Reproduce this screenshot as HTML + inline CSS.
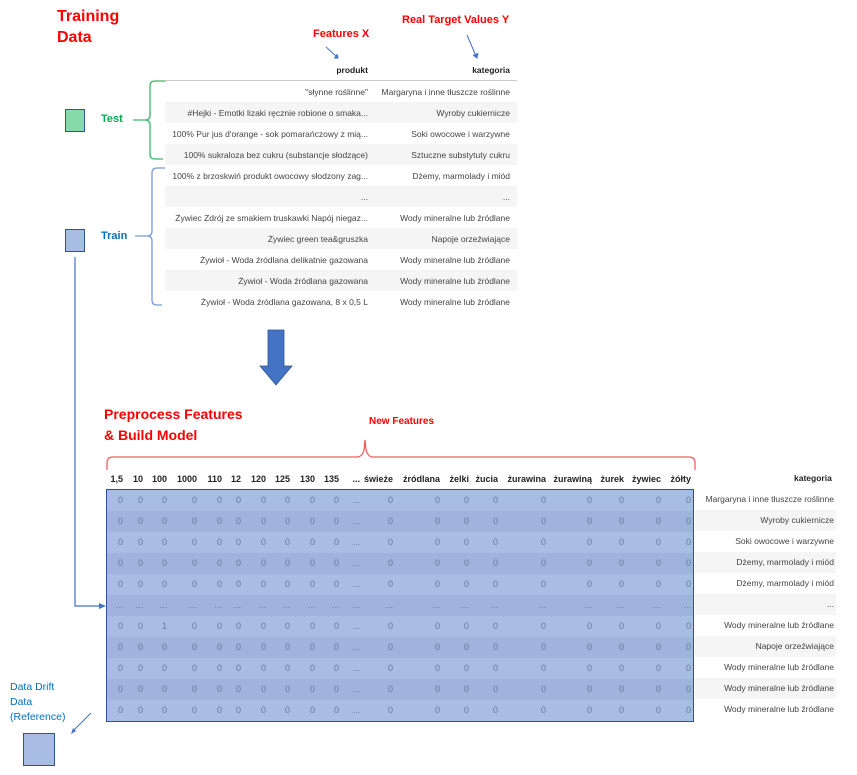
<!DOCTYPE html>
<html><head><meta charset="utf-8">
<style>
*{margin:0;padding:0;box-sizing:border-box}
body{width:857px;height:775px;background:#fff;position:relative;overflow:hidden;font-family:"Liberation Sans",sans-serif}
.a{position:absolute;white-space:nowrap}
.red{color:#f00;font-weight:bold}
.t1{position:absolute;left:165px;top:60px;width:352px;font-size:8.5px;color:#444}
.t1 .r{display:flex;height:21px;align-items:center}
.t1 .r.g{background:#f5f5f5}
.t1 .c1{width:203px;text-align:right;overflow:hidden}
.t1 .c2{width:142px;text-align:right}
.t1 .h{font-weight:bold;color:#222;border-bottom:1.5px solid #ccc;height:21px}
.grid{position:absolute;left:107px;display:grid;grid-template-columns:16px 20px 24px 30px 25px 19px 25px 24px 25px 24px 21px 33px 47px 29px 29px 48px 46px 32px 37px 30px;font-size:9px;height:21px;align-items:center}
.grid span{text-align:right}
.hd{top:468px;font-weight:bold;color:#222}
.dt{color:#66779a}
.box{position:absolute;left:106px;top:489px;width:588px;height:233px;border:1.5px solid #2f4f9f}
.kat{position:absolute;left:695px;width:141px;height:21px;font-size:8.5px;color:#444;text-align:right;line-height:21px;padding-right:2px}
</style></head><body>

<div class="a red" style="left:57px;top:6px;font-size:16px;line-height:21px">Training<br>Data</div>
<div class="a red" style="left:313px;top:28px;font-size:11px">Features X</div>
<div class="a red" style="left:402px;top:14px;font-size:11px">Real Target Values Y</div>

<svg class="a" style="left:0;top:0" width="857" height="775">
 <g stroke="#4472c4" stroke-width="1" fill="none">
  <line x1="326" y1="47" x2="337" y2="57"/><path d="M334 58 L338 58 L337 54" fill="#4472c4"/>
  <line x1="467" y1="35" x2="476" y2="56"/><path d="M473 55 L477 58 L478 53" fill="#4472c4"/>
 </g>
 <path d="M166 81 H155 Q150 81 150 86 V115 Q150 120 145 120 H133 M145 120 Q150 120 150 125 V154 Q150 159 155 159 H163" stroke="#3cb86a" stroke-width="1.3" fill="none"/>
 <path d="M165 168 H157 Q152 168 152 173 V231 Q152 236 147 236 H135 M147 236 Q152 236 152 241 V300 Q152 305 157 305 H162" stroke="#7a9ad8" stroke-width="1.3" fill="none"/>
 <rect x="65.5" y="109.5" width="19" height="22" fill="#86d9a8" stroke="#2f5597"/>
 <rect x="65.5" y="229.5" width="19" height="22" fill="#a9bce3" stroke="#2f5597"/>
 <path d="M75 257 V606 H100" stroke="#4472c4" stroke-width="1.2" fill="none"/>
 <path d="M99 603 L106 606 L99 609 Z" fill="#4472c4"/>
 <path d="M268 330 H284 V366 H292 L276 385 L260 366 H268 Z" fill="#4472c4" stroke="#2f5597" stroke-width="0.8"/>
 <path d="M107 470 V463 Q107 457 113 457 H357 Q362 457 364 450 L365 440 L366 450 Q368 457 373 457 H689 Q695 457 695 463 V470" stroke="#f06060" stroke-width="1.3" fill="none"/>
 <rect x="23.5" y="733.5" width="31" height="32" fill="#a9bce3" stroke="#2f5597"/>
 <line x1="91" y1="713" x2="73" y2="731" stroke="#4472c4"/>
 <path d="M71 734 L73 728 L76 731 Z" fill="#4472c4"/>
</svg>

<div class="a" style="left:101px;top:113px;font-size:11px;font-weight:bold;color:#00b050">Test</div>
<div class="a" style="left:101px;top:230px;font-size:11px;font-weight:bold;color:#0070c0">Train</div>

<div class="t1">
 <div class="r h"><div class="c1">produkt</div><div class="c2">kategoria</div></div>
 <div class="r"><div class="c1">"słynne roślinne"</div><div class="c2">Margaryna i inne tłuszcze roślinne</div></div>
 <div class="r g"><div class="c1">#Hejki - Emotki lizaki ręcznie robione o smaka...</div><div class="c2">Wyroby cukiernicze</div></div>
 <div class="r"><div class="c1">100% Pur jus d'orange - sok pomarańczowy z mią...</div><div class="c2">Soki owocowe i warzywne</div></div>
 <div class="r g"><div class="c1">100% sukraloza bez cukru (substancje słodzące)</div><div class="c2">Sztuczne substytuty cukru</div></div>
 <div class="r"><div class="c1">100% z brzoskwiń produkt owocowy słodzony zag...</div><div class="c2">Dżemy, marmolady i miód</div></div>
 <div class="r g"><div class="c1">...</div><div class="c2">...</div></div>
 <div class="r"><div class="c1">Żywiec Zdrój ze smakiem truskawki Napój niegaz...</div><div class="c2">Wody mineralne lub źródlane</div></div>
 <div class="r g"><div class="c1">Żywiec green tea&amp;gruszka</div><div class="c2">Napoje orzeźwiające</div></div>
 <div class="r"><div class="c1">Żywioł - Woda źródlana delikatnie gazowana</div><div class="c2">Wody mineralne lub źródlane</div></div>
 <div class="r g"><div class="c1">Żywioł - Woda źródlana gazowana</div><div class="c2">Wody mineralne lub źródlane</div></div>
 <div class="r"><div class="c1">Żywioł - Woda źródlana gazowana, 8 x 0,5 L</div><div class="c2">Wody mineralne lub źródlane</div></div>
</div>

<div class="a red" style="left:104px;top:404px;font-size:14px;line-height:21px">Preprocess Features<br>&amp; Build Model</div>
<div class="a red" style="left:369px;top:416px;font-size:10px">New Features</div>

<div class="grid hd"><span>1,5</span><span>10</span><span>100</span><span>1000</span><span>110</span><span>12</span><span>120</span><span>125</span><span>130</span><span>135</span><span>...</span><span>świeże</span><span>źródlana</span><span>żelki</span><span>żucia</span><span>żurawina</span><span>żurawiną</span><span>żurek</span><span>żywiec</span><span>żółty</span></div>
<div class="a" style="left:794px;top:473px;font-size:8.5px;font-weight:bold;color:#222">kategoria</div>

<div class="a" style="left:107px;top:490px;width:586px;height:231px;background:repeating-linear-gradient(#a9bce3 0 21px,#9fb3dc 21px 42px)"></div>
<div class="box"></div>

<div class="grid dt" style="top:489px"><span>0</span><span>0</span><span>0</span><span>0</span><span>0</span><span>0</span><span>0</span><span>0</span><span>0</span><span>0</span><span>...</span><span>0</span><span>0</span><span>0</span><span>0</span><span>0</span><span>0</span><span>0</span><span>0</span><span>0</span></div>
<div class="grid dt" style="top:510px"><span>0</span><span>0</span><span>0</span><span>0</span><span>0</span><span>0</span><span>0</span><span>0</span><span>0</span><span>0</span><span>...</span><span>0</span><span>0</span><span>0</span><span>0</span><span>0</span><span>0</span><span>0</span><span>0</span><span>0</span></div>
<div class="grid dt" style="top:531px"><span>0</span><span>0</span><span>0</span><span>0</span><span>0</span><span>0</span><span>0</span><span>0</span><span>0</span><span>0</span><span>...</span><span>0</span><span>0</span><span>0</span><span>0</span><span>0</span><span>0</span><span>0</span><span>0</span><span>0</span></div>
<div class="grid dt" style="top:552px"><span>0</span><span>0</span><span>0</span><span>0</span><span>0</span><span>0</span><span>0</span><span>0</span><span>0</span><span>0</span><span>...</span><span>0</span><span>0</span><span>0</span><span>0</span><span>0</span><span>0</span><span>0</span><span>0</span><span>0</span></div>
<div class="grid dt" style="top:573px"><span>0</span><span>0</span><span>0</span><span>0</span><span>0</span><span>0</span><span>0</span><span>0</span><span>0</span><span>0</span><span>...</span><span>0</span><span>0</span><span>0</span><span>0</span><span>0</span><span>0</span><span>0</span><span>0</span><span>0</span></div>
<div class="grid dt" style="top:594px"><span>...</span><span>...</span><span>...</span><span>...</span><span>...</span><span>...</span><span>...</span><span>...</span><span>...</span><span>...</span><span>...</span><span>...</span><span>...</span><span>...</span><span>...</span><span>...</span><span>...</span><span>...</span><span>...</span><span>...</span></div>
<div class="grid dt" style="top:615px"><span>0</span><span>0</span><span>1</span><span>0</span><span>0</span><span>0</span><span>0</span><span>0</span><span>0</span><span>0</span><span>...</span><span>0</span><span>0</span><span>0</span><span>0</span><span>0</span><span>0</span><span>0</span><span>0</span><span>0</span></div>
<div class="grid dt" style="top:636px"><span>0</span><span>0</span><span>0</span><span>0</span><span>0</span><span>0</span><span>0</span><span>0</span><span>0</span><span>0</span><span>...</span><span>0</span><span>0</span><span>0</span><span>0</span><span>0</span><span>0</span><span>0</span><span>0</span><span>0</span></div>
<div class="grid dt" style="top:657px"><span>0</span><span>0</span><span>0</span><span>0</span><span>0</span><span>0</span><span>0</span><span>0</span><span>0</span><span>0</span><span>...</span><span>0</span><span>0</span><span>0</span><span>0</span><span>0</span><span>0</span><span>0</span><span>0</span><span>0</span></div>
<div class="grid dt" style="top:678px"><span>0</span><span>0</span><span>0</span><span>0</span><span>0</span><span>0</span><span>0</span><span>0</span><span>0</span><span>0</span><span>...</span><span>0</span><span>0</span><span>0</span><span>0</span><span>0</span><span>0</span><span>0</span><span>0</span><span>0</span></div>
<div class="grid dt" style="top:699px"><span>0</span><span>0</span><span>0</span><span>0</span><span>0</span><span>0</span><span>0</span><span>0</span><span>0</span><span>0</span><span>...</span><span>0</span><span>0</span><span>0</span><span>0</span><span>0</span><span>0</span><span>0</span><span>0</span><span>0</span></div>

<div class="kat" style="top:489px">Margaryna i inne tłuszcze roślinne</div>
<div class="kat" style="top:510px;background:#f5f5f5">Wyroby cukiernicze</div>
<div class="kat" style="top:531px">Soki owocowe i warzywne</div>
<div class="kat" style="top:552px;background:#f5f5f5">Dżemy, marmolady i miód</div>
<div class="kat" style="top:573px">Dżemy, marmolady i miód</div>
<div class="kat" style="top:594px;background:#f5f5f5">...</div>
<div class="kat" style="top:615px">Wody mineralne lub źródlane</div>
<div class="kat" style="top:636px;background:#f5f5f5">Napoje orzeźwiające</div>
<div class="kat" style="top:657px">Wody mineralne lub źródlane</div>
<div class="kat" style="top:678px;background:#f5f5f5">Wody mineralne lub źródlane</div>
<div class="kat" style="top:699px">Wody mineralne lub źródlane</div>

<div class="a" style="left:10px;top:680px;font-size:10.5px;line-height:15px;color:#0070c0">Data Drift<br>Data<br>(Reference)</div>
</body></html>
